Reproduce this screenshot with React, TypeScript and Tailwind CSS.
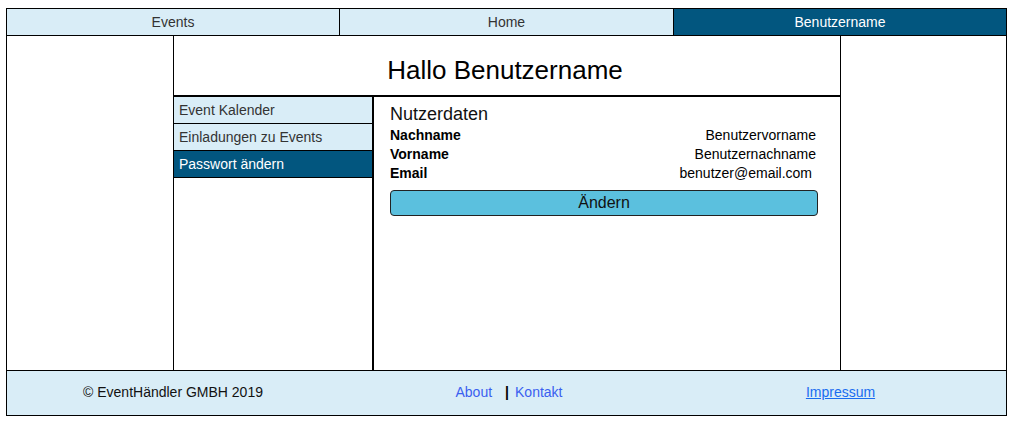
const LIGHT = 'bg-[#d9edf7]'

function NavTab({ label, active, last }: { label: string; active?: boolean; last?: boolean }) {
  return (
    <div
      className={
        'flex h-[26px] items-center justify-center text-[14px] ' +
        (active ? 'bg-[#02567f] text-white' : LIGHT + ' text-[#333]') +
        (last ? '' : ' border-r border-black')
      }
    >
      {label}
    </div>
  )
}

function SideItem({ label, active }: { label: string; active?: boolean }) {
  return (
    <div
      className={
        'flex h-[27px] items-center border-b border-black pl-[5px] text-[14px] ' +
        (active ? 'bg-[#02567f] text-white' : 'bg-[#d9edf7] text-[#333]')
      }
    >
      {label}
    </div>
  )
}

function DataRow({ label, value, extra }: { label: string; value: string; extra?: boolean }) {
  return (
    <div className="flex h-[19px] items-center justify-between text-[14px] text-black">
      <span className="font-bold">{label}</span>
      <span className={extra ? 'pr-[6px]' : 'pr-[2px]'}>{value}</span>
    </div>
  )
}

export default function App() {
  return (
    <div className="min-h-screen bg-white pt-[8px] pl-[6px] font-['Liberation_Sans',Arial,sans-serif]">
      <div className="w-[1001px] border border-black">
        {/* top nav */}
        <div className="grid grid-cols-[333px_334px_332px] border-b border-black">
          <NavTab label="Events" />
          <NavTab label="Home" />
          <NavTab label="Benutzername" active last />
        </div>

        {/* main */}
        <div className="flex h-[334px]">
          <div className="w-[167px] border-r border-black" />
          <div className="flex w-[667px] flex-col border-r border-black">
            <div className="flex h-[61px] items-center justify-center border-b-2 border-black pt-[10px] pr-[4px] text-[26px] text-black">
              Hallo Benutzername
            </div>
            <div className="flex flex-1">
              <div className="w-[200px] border-r-2 border-black">
                <SideItem label="Event Kalender" />
                <SideItem label="Einladungen zu Events" />
                <SideItem label="Passwort ändern" active />
              </div>
              <div className="flex-1 pt-[5px] pl-[16px] pr-[22px]">
                <div className="h-[24px] text-[18px] leading-[24px] text-[#111]">Nutzerdaten</div>
                <DataRow label="Nachname" value="Benutzervorname" />
                <DataRow label="Vorname" value="Benutzernachname" />
                <DataRow label="Email" value="benutzer@email.com" extra />
                <button className="mt-[7px] flex h-[26px] w-full items-center justify-center rounded-[4px] border border-[#222] bg-[#5bc0de] text-[16px] text-[#111]">
                  Ändern
                </button>
              </div>
            </div>
          </div>
          <div className="flex-1" />
        </div>

        {/* footer */}
        <div className="grid h-[45px] grid-cols-[333px_333px_333px] items-center border-t border-black bg-[#d9edf7] pb-[1px] text-[14px]">
          <div className="pr-[1px] text-center text-[#111]">© EventHändler GMBH 2019</div>
          <div className="flex items-center justify-center pl-[5px]">
            <a className="text-[#3a5ff0]">About</a>
            <span className="ml-[13px] mr-[6px] font-bold text-black">|</span>
            <a className="text-[#3a5ff0]">Kontakt</a>
          </div>
          <div className="pl-[2px] text-center">
            <a className="text-[#1a6cf0] underline">Impressum</a>
          </div>
        </div>
      </div>
    </div>
  )
}
